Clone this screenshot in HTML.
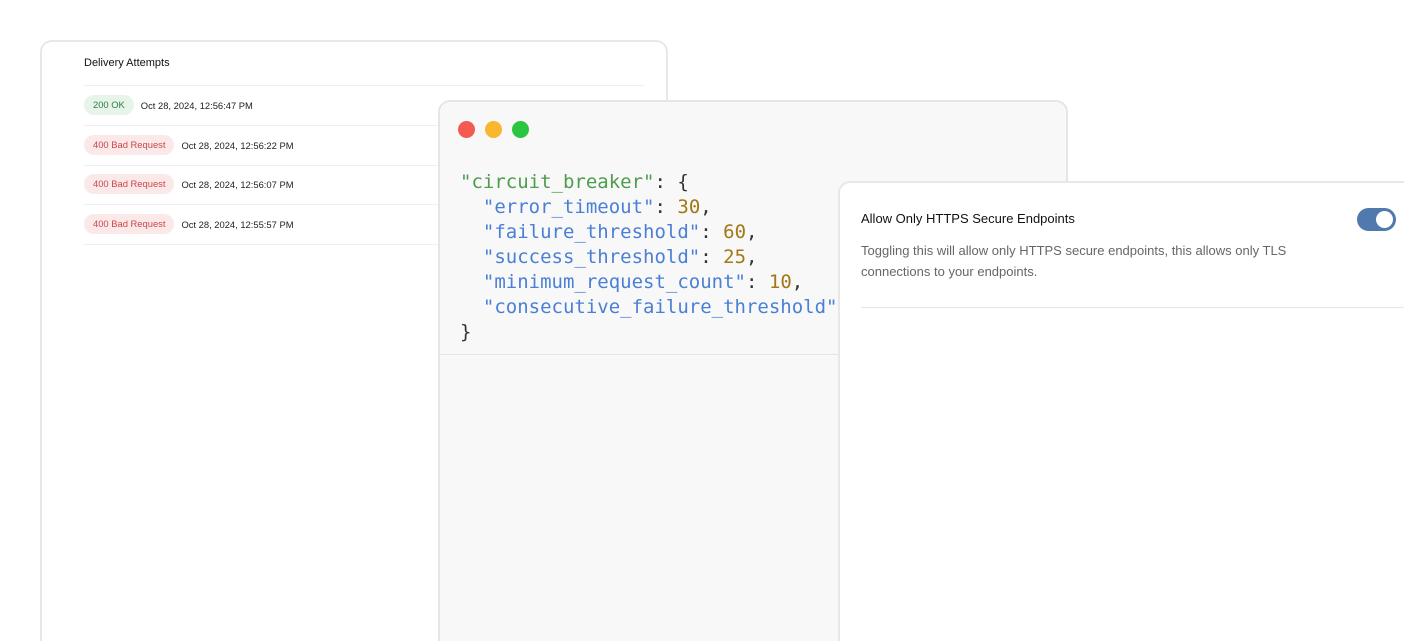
<!DOCTYPE html>
<html style="height:641px;overflow:hidden"><head><style>
*{margin:0;padding:0;box-sizing:border-box}
body{width:1404px;height:641px;background:#fff;position:relative;overflow:hidden;font-family:"Liberation Sans",sans-serif}
.card1{position:absolute;left:40px;top:40px;width:628px;height:620px;border:2px solid #e8e8ea;border-radius:12px;background:#fff}
.h{position:absolute;left:42px;top:15px;font-size:11px;color:#111;font-weight:500}
.line{position:absolute;left:42px;width:560px;height:1px;background:#efeff1}
.row{position:absolute;left:42px;display:flex;align-items:center;font-size:9.4px;color:#222}
.b{border-radius:10px;padding:0 9px;height:20px;line-height:20px;margin-right:7px;font-size:9.4px}
.ok{background:#e6f4ea;color:#2f7d45}
.bad{background:#fbe9e9;color:#c8474a}
.code{position:absolute;left:438px;top:100px;width:630px;height:560px;border:2px solid #e6e6e8;border-radius:12px;background:#f8f8f8}
.dot{position:absolute;top:19px;width:17px;height:17px;border-radius:50%}
pre{position:absolute;left:20px;top:68px;font-family:"DejaVu Sans Mono",monospace;font-size:19px;line-height:25px;color:#333}
.s{color:#4e9c4c}.k{color:#4a7fd6}.n{color:#a07915}
.sep{position:absolute;left:0;right:0;top:252px;height:1px;background:#e6e6e8}
.card3{position:absolute;left:838px;top:181px;width:600px;height:480px;border:2px solid #e8e8ea;border-radius:12px;background:#fff}
.t{position:absolute;left:21px;top:28px;font-size:13px;color:#111}
.d{position:absolute;left:21px;top:57px;font-size:13px;color:#666;line-height:21px;width:470px}
.tg{position:absolute;left:517px;top:25px;width:39px;height:23px;border-radius:12px;background:#5079ad}
.tg:after{content:"";position:absolute;right:3px;top:3px;width:17px;height:17px;border-radius:50%;background:#fff}
.l3{position:absolute;left:21px;top:124px;right:0;height:1px;background:#e6e6e8}
</style></head><body>
<div class="card1">
<div class="h">Delivery Attempts</div>
<div class="line" style="top:43px"></div>
<div class="row" style="top:53px"><span class="b ok">200 OK</span>Oct 28, 2024, 12:56:47 PM</div>
<div class="line" style="top:83px"></div>
<div class="row" style="top:93px"><span class="b bad">400 Bad Request</span>Oct 28, 2024, 12:56:22 PM</div>
<div class="line" style="top:123px"></div>
<div class="row" style="top:132px"><span class="b bad">400 Bad Request</span>Oct 28, 2024, 12:56:07 PM</div>
<div class="line" style="top:162px"></div>
<div class="row" style="top:172px"><span class="b bad">400 Bad Request</span>Oct 28, 2024, 12:55:57 PM</div>
<div class="line" style="top:202px"></div>
</div>
<div class="code">
<div class="dot" style="left:18px;background:#f25a52"></div>
<div class="dot" style="left:45px;background:#f8b72d"></div>
<div class="dot" style="left:72px;background:#2bc63f"></div>
<pre><span class="s">"circuit_breaker"</span>: {
  <span class="k">"error_timeout"</span>: <span class="n">30</span>,
  <span class="k">"failure_threshold"</span>: <span class="n">60</span>,
  <span class="k">"success_threshold"</span>: <span class="n">25</span>,
  <span class="k">"minimum_request_count"</span>: <span class="n">10</span>,
  <span class="k">"consecutive_failure_threshold"</span>
}</pre>
<div class="sep"></div>
</div>
<div class="card3">
<div class="t">Allow Only HTTPS Secure Endpoints</div>
<div class="tg"></div>
<div class="d">Toggling this will allow only HTTPS secure endpoints, this allows only TLS connections to your endpoints.</div>
<div class="l3"></div>
</div>
</body></html>
